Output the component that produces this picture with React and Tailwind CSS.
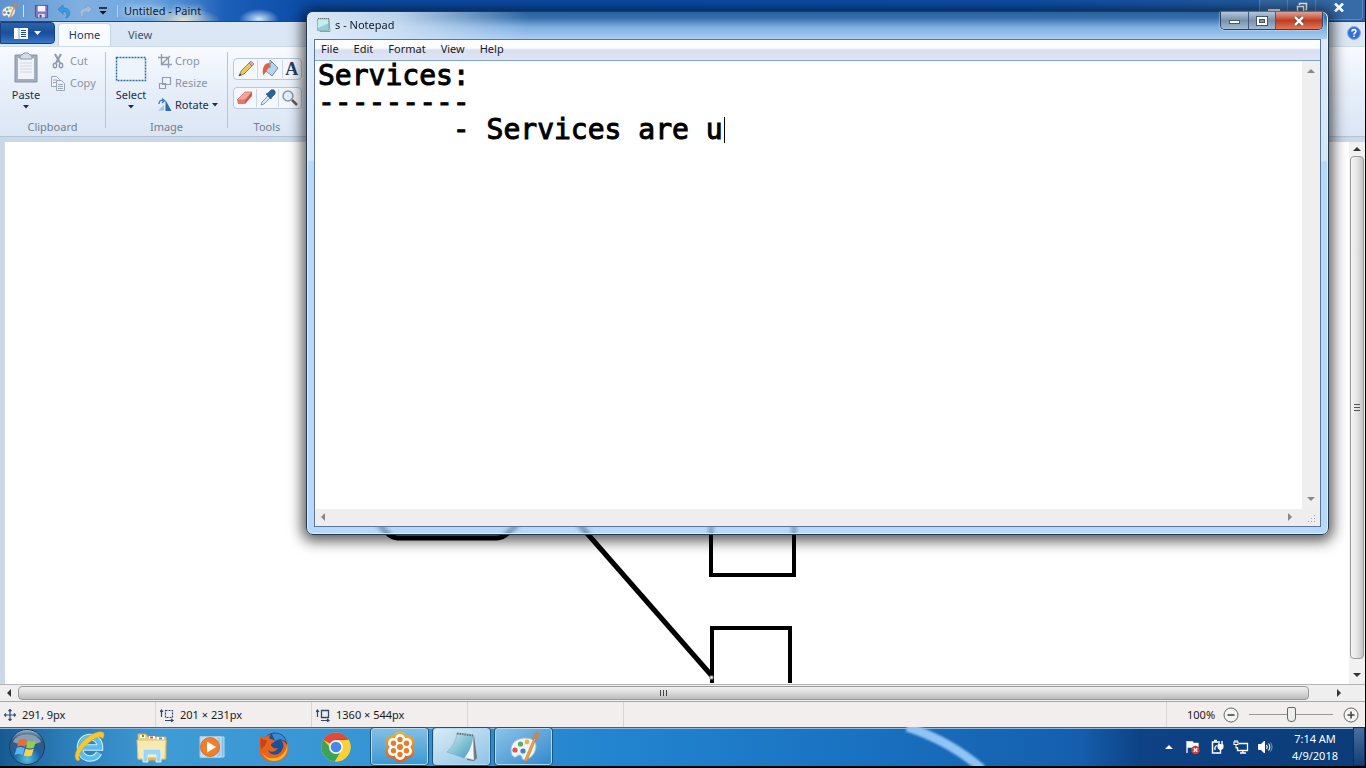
import React from "react";

const Caret = ({ className = "" }) => (
  <svg className={className} width="6" height="4" viewBox="0 0 6 4" fill="currentColor" aria-hidden="true">
    <path d="M0 0h6L3 3.5z" />
  </svg>
);

const Arrow = ({ dir, className = "" }) => {
  const d = {
    up: "M0 6h8L4 2z",
    down: "M0 2h8L4 6z",
    left: "M6 0v8L2 4z",
    right: "M2 0v8L6 4z",
  }[dir];
  return (
    <svg className={className} width="8" height="8" viewBox="0 0 8 8" fill="currentColor" aria-hidden="true">
      <path d={d} />
    </svg>
  );
};

const PaletteIcon = ({ size }) => (
  <svg width={size} height={size} viewBox="0 0 32 32" aria-hidden="true">
    <path d="M3 20C2 12 9 7 17 7c7 0 11 3 11 8 0 7-5 13-12 14-3 0-1-4-4-5-3 0-3 3-6 2-2-1-3-3-3-6z" fill="#eef6fc" stroke="#9db9cf" strokeWidth="1" />
    <circle cx="7" cy="19" r="2.6" fill="#e0564b" />
    <circle cx="12.500" cy="13" r="2.600" fill="#5cae5e" />
    <circle cx="19" cy="11" r="2.400" fill="#f2b33c" />
    <circle cx="15" cy="20" r="2.600" fill="#3f86ba" />
    <path d="M28 8 19 30l-2 .5L17 28 26 7z" fill="#eda044" stroke="#c07b2c" strokeWidth=".6" />
    <path d="M25 7c-1-3 1-5 4-7 1 2 4 2 3 5-1 2-2 4-4 4z" fill="#b98b60" />
  </svg>
);

const NotepadSmall = () => (
  <svg width="16" height="16" viewBox="0 0 16 16" aria-hidden="true">
    <path d="M2 2h11l1 12.500H4z" fill="#e9f2ee" stroke="#8c8c6c" strokeWidth=".8" />
    <path d="M1.500 2h11v11.500h-11z" fill="#8fd0d8" stroke="#78a5ac" strokeWidth=".7" />
    <path d="M2 2.500h10v4L2 11z" fill="#c5ecee" />
    <path d="M2 1.500h11" stroke="#64757c" strokeDasharray="1 1" />
  </svg>
);

const Flag = () => (
  <svg width="16" height="16" viewBox="0 0 16 16" aria-hidden="true">
    <path d="M2 2v12M2.500 3h5l1 1.500H13v5H8L7 8H2.500z" stroke="#fff" strokeWidth="1.300" fill="#fff" />
    <circle cx="10.500" cy="11" r="4.300" fill="#d33a35" />
    <path d="m8.700 9.200 3.600 3.600m0-3.600-3.600 3.600" stroke="#fff" strokeWidth="1.400" />
  </svg>
);

const Power = () => (
  <svg width="16" height="16" viewBox="0 0 16 16" fill="none" stroke="#fff" aria-hidden="true">
    <path d="M9 3H3.500v11H9M5 1.500h3" strokeWidth="1.500" />
    <path d="M6 11c-.5-3 .5-4 2-4.500" strokeWidth="1.300" />
    <path d="M9 5.500h5v2.500c0 2-1 2.500-2.500 2.500S9 10 9 8z" fill="#fff" />
    <path d="M10 2v3m3-3v3M11.500 10v4H8" strokeWidth="1.400" />
  </svg>
);

const Network = () => (
  <svg width="16" height="16" viewBox="0 0 16 16" fill="none" stroke="#fff" aria-hidden="true">
    <path d="M6 4.500h8.500v7H4.500V8M7 14h6M9.800 11.500V14" strokeWidth="1.300" />
    <path d="M1 3h4v2.500H1zM3 5.500V9h1.500M2 1v2M4 1v2" strokeWidth="1.100" />
  </svg>
);

const Volume = () => (
  <svg width="16" height="16" viewBox="0 0 16 16" fill="none" stroke="#fff" aria-hidden="true">
    <path d="M1.500 5.500H4l3.500-3.500v12L4 10.500H1.500z" fill="#fff" />
    <path d="M9.500 6c1 1.300 1 2.700 0 4" strokeWidth="1.200" />
    <path d="M11.500 4.500c1.800 2.300 1.800 4.700 0 7" strokeWidth="1.100" />
    <path d="M13.500 3.500c2 3 2 6 0 9" strokeWidth=".8" opacity=".6" />
  </svg>
);

const Start = () => (
  <svg width="38" height="38" viewBox="0 0 38 38" aria-hidden="true">
    <defs>
      <radialGradient id="orb" cx=".5" cy=".85" r=".85">
        <stop offset="0" stopColor="#4fc1e8" />
        <stop offset=".45" stopColor="#1d639e" />
        <stop offset=".8" stopColor="#38597b" />
        <stop offset="1" stopColor="#a9c2d6" />
      </radialGradient>
    </defs>
    <circle cx="19" cy="19" r="17.500" fill="url(#orb)" stroke="#133f6a" />
    <path d="M5 14a15 12 0 0 1 28 0c-9 4-19 4-28 0z" fill="#c9d8e4" opacity=".55" />
    <path d="M11 12c3-2 5-1.500 8 0l-2 7c-3-1.500-5-1.500-8-.2z" fill="#ef6b32" />
    <path d="M20 12.500c3 1.500 5 1.500 8 0l-2 7c-3 1.300-5 1.300-8 0z" fill="#9bcb47" />
    <path d="M8.600 20c3-1.500 5-1 8 .3l-2 6.800c-3-1.500-5-1.500-8 0z" fill="#5cb4ea" />
    <path d="M17.700 20.800c3 1.300 5 1.300 8 0l-2 6.700c-3 1.500-5 1.200-8 0z" fill="#fdd14a" />
  </svg>
);

const Explorer = () => (
  <svg width="32" height="32" viewBox="0 0 32 32" aria-hidden="true">
    <path d="M25 22c-2 4-5 5.500-9 5.500-6 0-10-4.500-10-11S10.500 6 16 6s10 4 10 10.500H8" fill="none" stroke="#d2f1fc" strokeWidth="6.500" />
    <path d="M25 22c-2 4-5 5.500-9 5.500-6 0-10-4.500-10-11S10.500 6 16 6s10 4 10 10.500H8" fill="none" stroke="#5cbdec" strokeWidth="4.500" />
    <path d="M4 30C-3 27 4 13 14 6 22 0 31-1 30 4c0 2-1 3-2 4 0-3-4-3-11 2C9 16 2 25 6 28.500z" fill="#f6c832" stroke="#d69d1c" strokeWidth=".5" />
  </svg>
);

const Folder = () => (
  <svg width="34" height="32" viewBox="0 0 34 32" aria-hidden="true">
    <path d="M3 3h8l2 3h18v22H3z" fill="#e9d588" stroke="#c9ac55" />
    <path d="M5 4h5v3H5zM14 5h6v3h-6zM22 6h7v3h-7z" fill="#fff" />
    <path d="M7 5h2" stroke="#3ba84d" strokeWidth="2" />
    <path d="M15 6.500h3" stroke="#d55147" strokeWidth="2" />
    <path d="M24 7.500h3" stroke="#4c8bc4" strokeWidth="2" />
    <path d="M2 9h29l-1 19H3z" fill="#f8eaae" stroke="#d9c277" />
    <path d="M8 31V20q0-2 2-2h14q2 0 2 2v11h-5v-7h-8v7z" fill="#9ed3f2" stroke="#e2f4fd" />
    <path d="M13 28h8" stroke="#e9b64a" strokeWidth="3" />
  </svg>
);

const Media = () => (
  <svg width="28" height="28" viewBox="0 0 28 28" aria-hidden="true">
    <path d="M8 4h18v20H8z" fill="#86bce4" stroke="#b9dcf5" />
    <path d="M5 4h18v20H5z" fill="#9ccbed" stroke="#c9e4f7" />
    <path d="M2 3.500h18v21H2z" fill="#c4ddf0" stroke="#a6c8e3" />
    <circle cx="12" cy="14" r="9.500" fill="#ef7f2c" stroke="#c95f17" strokeWidth=".7" />
    <path d="M9 8.500v11l9-5.500z" fill="#fff" />
  </svg>
);

const Firefox = () => (
  <svg width="32" height="32" viewBox="0 0 32 32" aria-hidden="true">
    <circle cx="17" cy="14" r="12.500" fill="#1f4f96" />
    <path d="M14 3c6-2 12 1 14 7l-6-2-5 2z" fill="#3a8bce" />
    <path d="M2 5c1 1 2 2 4 2 2-2 5-3 7-4-2 2-2 4-1 5 2 0 4 1 5 2-1 2-4 2-4 4 1 3 4 4 7 3-2 4-7 5-10 2 2 6 12 7 15-2 1-3 0-6-2-8 3 1 5 3 6 5 0-3-1-5-2-7 3 4 4 8 3 13-2 7-8 11-15 11C5 31-1 22 1.500 12 1 10 1 7 2 5z" fill="#e8631c" />
    <path d="M4 21c4 7 14 9 21 2 3-3 4-7 4-10 2 8-3 17-13 17-6 0-10-4-12-9z" fill="#f8b62d" />
    <path d="M3 7c2 2 4 2 6 2l-2 6c-2 0-3 2-3 4-2-4-2-8-1-12z" fill="#c6401b" />
  </svg>
);

const Chrome = () => (
  <svg width="32" height="32" viewBox="0 0 32 32" aria-hidden="true">
    <circle cx="16" cy="16" r="14.500" fill="#fcd037" />
    <path d="M16 16 3.400 8.700A14.500 14.500 0 0 1 28.600 8.800z" fill="#de4b3e" />
    <path d="M3.400 8.700A14.500 14.500 0 0 0 15 30.500l6-11-9-1z" fill="#3da354" />
    <path d="M16 9h12.700a14.500 14.500 0 0 1-13.700 21.500l7-11z" fill="#fcd037" />
    <path d="M16 9H28.700L16 8z" fill="#c83c34" />
    <circle cx="16" cy="16" r="7" fill="#f3f6f9" />
    <circle cx="16" cy="16" r="5.300" fill="#4587ea" />
  </svg>
);

const Flower = () => (
  <svg width="32" height="32" viewBox="0 0 32 32" aria-hidden="true">
    <defs>
      <linearGradient id="petal" x2="0" y1="0" y2="32" gradientUnits="userSpaceOnUse">
        <stop offset="0" stopColor="#f0b52c" />
        <stop offset="1" stopColor="#db5b26" />
      </linearGradient>
    </defs>
    <g fill="url(#petal)">
      <circle cx="16" cy="16" r="12" />
      <circle cx="16" cy="7.500" r="7" /><circle cx="23.500" cy="11.500" r="7" /><circle cx="23.500" cy="20.500" r="7" />
      <circle cx="16" cy="24.500" r="7" /><circle cx="8.500" cy="20.500" r="7" /><circle cx="8.500" cy="11.500" r="7" />
    </g>
    <g fill="#fff">
      <circle cx="16" cy="16" r="8" />
      <circle cx="16" cy="8" r="5" /><circle cx="23" cy="12" r="5" /><circle cx="23" cy="20" r="5" />
      <circle cx="16" cy="24" r="5" /><circle cx="9" cy="20" r="5" /><circle cx="9" cy="12" r="5" />
    </g>
    <g fill="#e57c29">
      <circle cx="16" cy="8.500" r="2.700" /><circle cx="22.500" cy="12.200" r="2.700" /><circle cx="22.500" cy="19.800" r="2.700" />
      <circle cx="16" cy="23.500" r="2.700" /><circle cx="9.500" cy="19.800" r="2.700" /><circle cx="9.500" cy="12.200" r="2.700" />
      <circle cx="16" cy="16" r="3" />
    </g>
  </svg>
);

const NotepadBig = () => (
  <svg width="34" height="32" viewBox="0 0 34 32" aria-hidden="true">
    <defs>
      <linearGradient id="pad" x2="1" y2="1">
        <stop offset="0" stopColor="#d2edf4" />
        <stop offset="1" stopColor="#3c9cba" />
      </linearGradient>
    </defs>
    <path d="M29 4l3 23-3 3-7-1z" fill="#6a7480" />
    <path d="M28 4l1 25-12-3z" fill="#f4f8f9" stroke="#aebcc4" strokeWidth=".6" />
    <path d="M12 2 28 4c-1 10-4 17-9 23L2 21C8 15 11 10 12 2z" fill="url(#pad)" stroke="#7ca9b8" strokeWidth=".6" />
    <path d="M12 2.500 28 4.500" stroke="#65727b" strokeWidth="2" strokeDasharray="1.500 1" />
  </svg>
);

function PaintTitleBar() {
  return (
    <header className="flex h-[22px] shrink-0 items-center justify-between bg-[radial-gradient(ellipse_36px_12px_at_184px_20px,#dfe3cf,transparent),radial-gradient(ellipse_20px_10px_at_259px_19px,#cfe6fb,transparent),linear-gradient(90deg,#5f93cf_0px,#80b0e1_80px,#6ba5e0_150px,#1c5fb8_225px,#0b4da8_300px,#0c50ac_75%,#2c63a3_100%)] pl-px shadow-[inset_0_-1px_0_#1b4a85]">
      <div className="flex items-center">
        <PaletteIcon size={16} />
        <span className="mx-1.5 h-3 w-px bg-[#d3e4f5]" />
        <button aria-label="Save" className="ml-1">
          <svg width="15" height="15" viewBox="0 0 16 16" aria-hidden="true">
            <path d="M1.500 1.500h13v13H3l-1.500-1z" fill="#8374bc" stroke="#574a93" />
            <path d="M4 2h8v6H4z" fill="#f3f4fb" />
            <path d="M4.500 10.500h7v4h-7z" fill="#d8d9e8" />
            <path d="M6 11.500h2v3H6z" fill="#4b4378" />
          </svg>
        </button>
        <button aria-label="Undo" className="ml-2">
          <svg width="15" height="15" viewBox="0 0 16 16" aria-hidden="true">
            <path d="M1 5.500 6.500 1v3c5 0 8 3 7 7-.5 2-2 3.500-4 4 2-3 1.500-7-3-7v3z" fill="#3f96e2" stroke="#2878c4" strokeWidth=".6" />
          </svg>
        </button>
        <button aria-label="Redo" className="ml-1.5">
          <svg width="15" height="15" viewBox="0 0 16 16" aria-hidden="true">
            <path d="M15 5.500 9.500 1v3c-5 0-8 3-7 7 .5 2 2 3.500 4 4-2-3-1.500-7 3-7v3z" fill="#a3bedb" stroke="#7f9dbe" strokeWidth=".6" />
          </svg>
        </button>
        <button aria-label="Customize toolbar" className="ml-1.5">
          <svg width="8" height="8" viewBox="0 0 8 8" aria-hidden="true"><path d="M0 1h8" stroke="#111" strokeWidth="1.500" /><path d="M.5 4h7L4 7.500z" fill="#111" /></svg>
        </button>
        <span className="ml-2.5 h-3 w-px bg-[#b9d3ee]" />
        <h1 className="ml-1.5 text-[#0b1a2c] [text-shadow:0_0_6px_#fff,0_0_8px_#dceaf8]">Untitled - Paint</h1>
      </div>
      <div className="flex h-full items-start text-white">
        <button aria-label="Minimize Paint" className="flex h-5 w-7 items-end justify-center border-l border-[#5988c0] bg-[#356ba9] pb-2"><span className="h-[3px] w-3 bg-white" /></button>
        <button aria-label="Restore Paint" className="flex h-5 w-7 items-center justify-center border-l border-[#5988c0] bg-[#356ba9] pb-1">
          <svg width="12" height="12" viewBox="0 0 12 12" fill="none" stroke="#fff" strokeWidth="1.500" aria-hidden="true"><path d="M3.500 3V1.500h7v6H9M1.500 4.500h6v6h-6z" /></svg>
        </button>
        <button aria-label="Close Paint" className="mr-0.5 flex h-5 w-12 items-center justify-center rounded-br border border-t-0 border-[#5988c0] bg-[#356ba9] pb-1">
          <svg width="10" height="9" viewBox="0 0 10 9" stroke="#fff" strokeWidth="2.600" aria-hidden="true"><path d="m1 .5 8 8m0-8-8 8" /></svg>
        </button>
      </div>
    </header>
  );
}

function Group({ label, className, children }) {
  return (
    <section className={"flex shrink-0 flex-col justify-between " + className} aria-label={label}>
      <div className="flex">{children}</div>
      <p className="text-center leading-[14px] text-[#737f8e]">{label}</p>
    </section>
  );
}

const Divider = () => <span className="h-[76px] w-px shrink-0 bg-[#b5c5d9]" />;

function Ribbon() {
  return (
    <>
      <nav className="flex h-6 shrink-0 items-end justify-between bg-[#dce7f5]">
        <div className="flex h-full items-end">
          <button aria-label="Paint menu" className="flex h-[22px] w-[55px] items-center justify-center gap-1.5 self-start rounded-r-sm border border-[#17427c] bg-linear-to-b from-[#2b62ae] via-[#1b4e9b] to-[#3679c8] text-white">
            <svg width="14" height="11" viewBox="0 0 14 11" aria-hidden="true"><path d="M0 0h14v11H0z" fill="#fff" /><path d="M7 2.500h5m-5 2h5m-5 2h5m-5 2h5" stroke="#1c4d93" /><path d="M5 0v11" stroke="#7ba0d0" /></svg>
            <svg width="7" height="4" viewBox="0 0 7 4" fill="#fff" aria-hidden="true"><path d="M0 0h7L3.500 4z" /></svg>
          </button>
          <button className="ml-[3px] h-[23px] w-[53px] rounded-t border border-b-0 border-[#c3d5ea] bg-[#f8fbff] text-[#1e395b]">Home</button>
          <button className="h-[23px] w-[58px] text-[#3d5370]">View</button>
        </div>
        <button aria-label="Help" className="mr-1 mb-1.5">
          <svg width="14" height="14" viewBox="0 0 14 14" aria-hidden="true">
            <circle cx="7" cy="7" r="6.400" fill="#2f6fe0" stroke="#8ba6cf" />
            <path d="M5 5.500C5 3 9.200 3 9 5.500 8.900 6.800 7 6.800 7 8.500M7 9.500v1.500" fill="none" stroke="#fff" strokeWidth="1.600" />
          </svg>
        </button>
      </nav>
      <div className="flex h-[91px] shrink-0 border-y border-t-[#cbd9ea] border-b-[#b3c3d6] bg-linear-to-b from-[#f8fbff] via-[#e6eef9] to-[#dbe6f5] pt-[5px] pb-0.5 text-[#1e2f48]">
        <Group label="Clipboard" className="w-[105px]">
          <button className="ml-2 flex w-9 flex-col items-center">
            <svg width="26" height="32" viewBox="0 0 26 32" aria-hidden="true">
              <path d="M2 3h22v27H2z" fill="#a3aebd" stroke="#8692a4" />
              <path d="M5 6h16v21H5z" fill="#f0f3f8" />
              <path d="M7 5c0-2 3-2 4-4h4c1 2 4 2 4 4v2H7z" fill="#d6dce5" stroke="#8b97a8" />
              <path d="M7 11h12M7 14h12M7 17h12M7 20h12" stroke="#d1d8e2" />
            </svg>
            <span className="mt-[3px] mb-0.5 leading-4">Paste</span>
            <Caret />
          </button>
          <div className="ml-1.5 flex flex-col gap-1.5 pt-px text-[#8a94a2]">
            <button className="flex h-4 items-center gap-1">
              <svg width="16" height="16" viewBox="0 0 16 16" fill="none" stroke="#8e99a9" strokeWidth="1.400" aria-hidden="true"><path d="m5 1 5 9M11 1 6 10" strokeWidth="2" /><ellipse cx="5" cy="12.500" rx="1.700" ry="2.200" /><ellipse cx="11" cy="12.500" rx="1.700" ry="2.200" /></svg>
              Cut
            </button>
            <button className="flex h-4 items-center gap-1">
              <svg width="16" height="16" viewBox="0 0 16 16" fill="#eef2f8" stroke="#9ba7b8" aria-hidden="true"><path d="M1.500 1.500h5l3 3v7h-8zM3 5h4M3 7.500h4" /><path d="M6.500 5.500h5l3 3v7h-8zM8 9.500h5m-5 2h5m-5 2h5" /></svg>
              Copy
            </button>
          </div>
        </Group>
        <Divider />
        <Group label="Image" className="w-[121px]">
          <button className="ml-1.5 flex w-[38px] flex-col items-center">
            <svg width="32" height="32" viewBox="0 0 32 32" aria-hidden="true"><path d="M1.500 5.500h29v23h-29z" fill="#eef4fc" stroke="#2e6da8" strokeWidth="1.500" strokeDasharray="2 1" /></svg>
            <span className="mt-[3px] mb-0.5 leading-4">Select</span>
            <Caret />
          </button>
          <div className="ml-2 flex flex-col gap-1.5 pt-px text-[#8a94a2]">
            <button className="flex h-4 items-center gap-[3px]">
              <svg width="14" height="14" viewBox="0 0 14 14" fill="none" stroke="#929dac" strokeWidth="1.400" aria-hidden="true"><path d="M3.500 0v10.500H14M0 3.500h10.500V14M4 10l8-8" /></svg>
              Crop
            </button>
            <button className="flex h-4 items-center gap-[3px]">
              <svg width="14" height="14" viewBox="0 0 14 14" fill="#edf2f9" stroke="#929dac" strokeWidth="1.200" aria-hidden="true"><path d="M4.500 1.500h8v7h-8zM1.500 7.500h6v5h-6z" /></svg>
              Resize
            </button>
            <button className="flex h-4 items-center gap-[3px] text-[#1e2f48]">
              <svg width="14" height="14" viewBox="0 0 14 14" aria-hidden="true"><path d="M0 12.500h6V7z" fill="#9ec3e4" /><path d="M7.500 13V2L13.500 13z" fill="#2b6db0" /><path d="M1 6C1 2.500 3 2 5 2.500M4 .5 6.500 2.700 4 5" fill="none" stroke="#3479bb" strokeWidth="1.300" /></svg>
              Rotate
              <Caret />
            </button>
          </div>
        </Group>
        <Divider />
        <Group label="Tools" className="w-[78px]">
          <div className="mt-1.5 ml-[5px] flex flex-col gap-[7px]">
            <div className="flex h-[22px] w-[69px] items-center justify-around divide-x divide-[#cbd7e5] rounded-sm border border-[#b9c8da] bg-[#f4f8fd]">
              <button aria-label="Pencil" className="flex grow justify-center">
                <svg width="18" height="18" viewBox="0 0 18 18" aria-hidden="true"><path d="m2 16 2-5 8-8 3 3-8 8z" fill="#efc456" stroke="#8d7437" strokeWidth=".8" /><path d="m12 3 2-2 3 3-2 2z" fill="#d9a5a0" stroke="#777" strokeWidth=".6" /><path d="m2 16 1-2.500L4.500 15z" fill="#333" /></svg>
              </button>
              <button aria-label="Fill with color" className="flex grow justify-center">
                <svg width="18" height="18" viewBox="0 0 18 18" aria-hidden="true"><path d="m5 7 6-5 6 6-6 8-6-5z" fill="#b7d3ec" stroke="#6a8db3" /><path d="M11 2 9 0v8" fill="none" stroke="#7389a2" /><path d="M8 3C3 3 1 8 2 15c2 0 3-5 7-8z" fill="#e26042" /></svg>
              </button>
              <button aria-label="Text" className="flex grow justify-center font-['Liberation_Serif',serif] text-[18px] leading-5 font-bold text-[#23405f]">A</button>
            </div>
            <div className="flex h-[22px] w-[69px] items-center justify-around divide-x divide-[#cbd7e5] rounded-sm border border-[#b9c8da] bg-[#f4f8fd]">
              <button aria-label="Eraser" className="flex grow justify-center">
                <svg width="18" height="18" viewBox="0 0 18 18" aria-hidden="true"><path d="m1 11 8-8h7l-7 8z" fill="#f3a598" stroke="#c05c52" strokeWidth=".6" /><path d="M1 11h8v4H2z" fill="#e7766b" /><path d="m9 11 7-8v4l-7 8z" fill="#d1564f" /></svg>
              </button>
              <button aria-label="Color picker" className="flex grow justify-center">
                <svg width="18" height="18" viewBox="0 0 18 18" aria-hidden="true"><path d="m2 16 1-3 6-6 2 2-6 6z" fill="#d4e8f7" stroke="#6387aa" strokeWidth=".8" /><path d="m7 5 2-1 3-3c3-1 5 1 4 4l-3 3-1 2z" fill="#2b6398" stroke="#1d4a78" strokeWidth=".6" /></svg>
              </button>
              <button aria-label="Magnifier" className="flex grow justify-center">
                <svg width="18" height="18" viewBox="0 0 18 18" aria-hidden="true"><circle cx="7" cy="7" r="5" fill="#e2effa" stroke="#8a97a6" strokeWidth="1.500" /><path d="m11 11 5 5" stroke="#6d5a4c" strokeWidth="2.500" /></svg>
              </button>
            </div>
          </div>
        </Group>
      </div>
    </>
  );
}

function PaintCanvas() {
  return (
    <main className="flex min-h-0 flex-1 flex-col bg-[#ccd8e8] pt-[5px]">
      <div className="flex min-h-0 flex-1">
        <div className="ml-[5px] min-w-0 flex-1 overflow-hidden bg-white">
          <svg width="1344" height="541" viewBox="5 142 1344 541" fill="none" stroke="#000" role="img" aria-label="Drawing">
            <path d="M378 524 386 532Q392 538 398 538H497Q503 538 509 532L518 524" strokeWidth="5" />
            <path d="M578 523 712 676" strokeWidth="5" />
            <path d="M711 480H794V575H711z" strokeWidth="4" />
            <path d="M712 700V628H790V700" strokeWidth="4" />
            <path d="M710 676h3v3h-3z" fill="#fff" stroke="#888" strokeWidth="1" />
          </svg>
        </div>
        <div className="flex w-4 flex-col items-center bg-[#f1f1f1] text-[#333]">
          <button aria-label="Scroll up" className="flex h-3.5 items-center"><Arrow dir="up" /></button>
          <div className="flex w-3.5 flex-1 items-center justify-center rounded-sm border border-[#9a9a9a] bg-linear-to-r from-[#f6f6f6] via-[#e3e3e3] to-[#c4c4c4]">
            <svg width="6" height="8" viewBox="0 0 6 8" stroke="#555" aria-hidden="true"><path d="M0 .5h6M0 3.500h6M0 6.500h6" /></svg>
          </div>
          <button aria-label="Scroll down" className="flex h-[25px] items-center pt-1.5"><Arrow dir="down" /></button>
        </div>
      </div>
      <div className="flex h-[17px] shrink-0 items-center border-t border-[#b5b5b5] bg-[#efefef] text-[#333]">
        <button aria-label="Scroll left" className="flex w-[18px] justify-center"><Arrow dir="left" /></button>
        <div className="flex h-3.5 flex-1 items-center justify-center rounded-sm border border-[#9a9a9a] bg-linear-to-b from-[#f0f0f0] via-[#d9d9d9] to-[#bdbdbd]">
          <svg width="8" height="6" viewBox="0 0 8 6" stroke="#444" aria-hidden="true"><path d="M.5 0v6M3.500 0v6M6.500 0v6" /></svg>
        </div>
        <button aria-label="Scroll right" className="flex w-14 justify-center pl-1"><Arrow dir="right" /></button>
      </div>
    </main>
  );
}

function StatusBar() {
  return (
    <footer className="flex h-[26px] shrink-0 items-center border-t border-[#a8a8a8] bg-[#f1eeed] text-[#1a1a1a]">
      <div className="flex h-full w-[156px] items-center gap-1.5 border-r border-[#d8d5d3] pl-1">
        <svg width="12" height="12" viewBox="0 0 12 12" fill="none" stroke="#2d4a70" strokeWidth="1.200" aria-hidden="true"><path d="M6 .5v11M.5 6h11M4.500 2 6 .5 7.500 2M4.500 10 6 11.500 7.500 10M2 4.500.5 6 2 7.500M10 4.500 11.500 6 10 7.500" /></svg>
        291, 9px
      </div>
      <div className="flex h-full w-[156px] items-center gap-1.5 border-r border-[#d8d5d3] pl-1">
        <svg width="14" height="14" viewBox="0 0 14 14" fill="none" stroke="#2d4a70" aria-hidden="true"><path d="M1.500 2v7M0 4l1.500-2L3 4M5 12.500h8M11 11l2 1.500-2 1.500" strokeWidth="1.200" /><path d="M5.500 2.500h7v7h-7z" strokeDasharray="2 1" strokeWidth="1.200" /></svg>
        201 × 231px
      </div>
      <div className="flex h-full w-[156px] items-center gap-1.5 border-r border-[#d8d5d3] pl-1">
        <svg width="14" height="14" viewBox="0 0 14 14" fill="none" stroke="#2d4a70" aria-hidden="true"><path d="M1.500 2v7M0 4l1.500-2L3 4M5 12.500h8M11 11l2 1.500-2 1.500" strokeWidth="1.200" /><path d="M5.500 2.500h7v7h-7z" strokeWidth="1.300" /></svg>
        1360 × 544px
      </div>
      <div className="h-full w-[156px] border-r border-[#d8d5d3]" />
      <div className="h-full flex-1 border-r border-[#d8d5d3]" />
      <div className="flex items-center pr-1.5 pl-5">
        <label htmlFor="zoom" className="w-9">100%</label>
        <button aria-label="Zoom out" className="flex">
          <svg width="16" height="16" viewBox="0 0 16 16" aria-hidden="true"><circle cx="8" cy="8" r="7" fill="#f5f5f5" stroke="#666" /><path d="M4.500 8h7" stroke="#444" strokeWidth="1.600" /></svg>
        </button>
        <input
          id="zoom"
          type="range"
          defaultValue="50"
          className="mx-2.5 h-4 w-[84px] appearance-none bg-[linear-gradient(#999,#999)] bg-[length:100%_1px] bg-center bg-no-repeat [&::-webkit-slider-thumb]:h-[15px] [&::-webkit-slider-thumb]:w-[9px] [&::-webkit-slider-thumb]:appearance-none [&::-webkit-slider-thumb]:rounded-t-[2px] [&::-webkit-slider-thumb]:rounded-b-[4px] [&::-webkit-slider-thumb]:border [&::-webkit-slider-thumb]:border-[#666] [&::-webkit-slider-thumb]:bg-[#eeeeee]"
        />
        <button aria-label="Zoom in" className="flex">
          <svg width="16" height="16" viewBox="0 0 16 16" aria-hidden="true"><circle cx="8" cy="8" r="7" fill="#f5f5f5" stroke="#666" /><path d="M4.500 8h7M8 4.500v7" stroke="#444" strokeWidth="1.600" /></svg>
        </button>
      </div>
    </footer>
  );
}

function Taskbar() {
  const task = "flex h-full w-[59px] items-center justify-center rounded-sm border border-[#1c5480] shadow-[inset_0_0_0_1px_#b4dbf3]";
  return (
    <nav aria-label="Taskbar" className="relative flex h-[39px] shrink-0 items-center justify-between bg-[linear-gradient(90deg,#175a92_0px,#2c7db8_65px,#3f9bd5_160px,#3795d6_370px,#2284cf_620px,#1a71c1_860px,#155eae_1080px,#0d4285_1140px,#0c3c78_100%)] shadow-[inset_0_1px_0_#3c6288,inset_0_2px_0_#8db9de]">
      <svg className="absolute top-0 left-[880px]" width="120" height="39" viewBox="0 0 120 39" fill="none" aria-hidden="true">
        <defs><filter id="soft"><feGaussianBlur stdDeviation="1.2" /></filter></defs>
        <path d="M27 0Q70 14 102 42" stroke="#8fc4f4" strokeWidth="9" filter="url(#soft)" />
      </svg>
      <div className="relative flex h-full items-center">
        <button aria-label="Start" className="flex w-[54px] justify-center"><Start /></button>
        <button aria-label="Internet Explorer" className="flex w-[72px] justify-center"><Explorer /></button>
        <button aria-label="Windows Explorer" className="flex w-[52px] justify-center"><Folder /></button>
        <button aria-label="Media Player" className="flex w-16 justify-center pl-1"><Media /></button>
        <button aria-label="Firefox" className="flex w-16 justify-center"><Firefox /></button>
        <button aria-label="Chrome" className="flex w-16 justify-center pr-1"><Chrome /></button>
        <div className="flex h-full gap-[3px]">
          <button aria-label="GoToMeeting" className={task + " bg-linear-to-b from-[#83bfe4] to-[#3798d3]"}><Flower /></button>
          <button aria-label="Notepad" className={task + " bg-linear-to-br from-[#d9edf7] to-[#8dc2e4]"}><NotepadBig /></button>
          <button aria-label="Paint" className={task + " bg-linear-to-br from-[#8bc3e9] to-[#2d8ace]"}><PaletteIcon size={32} /></button>
        </div>
      </div>
      <div className="flex h-full items-center text-white">
        <button aria-label="Show hidden icons" className="mr-3"><Arrow dir="up" /></button>
        <div className="flex gap-2"><Flag /><Power /><Network /><Volume /></div>
        <time className="mr-2.5 ml-3.5 w-14 text-center leading-[17px]">7:14 AM<br />4/9/2018</time>
        <button aria-label="Show desktop" className="h-full w-3 border border-[#09305f] bg-linear-to-b from-[#46709f] to-[#123f75]" />
      </div>
    </nav>
  );
}

function Notepad() {
  return (
    <section
      aria-label="Notepad"
      className="absolute top-[11px] right-9 left-[306px] flex h-[524px] flex-col rounded-[7px] border border-[#27394c] bg-[linear-gradient(180deg,#dfeafa_0px,#d3e6fa_148px,rgba(154,201,248,0.72)_150px)] px-[7px] pb-[7px] shadow-[inset_0_0_0_1px_rgba(235,246,255,0.75),0_2px_14px_4px_rgba(0,0,0,0.65)] backdrop-blur-[2px]"
    >
      <div className="-mx-[6px] flex h-[27px] shrink-0 items-start justify-between rounded-t-md bg-[linear-gradient(90deg,rgba(228,239,251,0.95)_0px,rgba(211,228,246,0.85)_90px,rgba(190,217,245,0)_220px),linear-gradient(180deg,#28609f_0px,#366fab_6px,#7eaedf_15px,#a9cdf2_27px)]">
        <div className="flex h-[25px] items-center gap-[3px] pl-2">
          <NotepadSmall />
          <h2 className="text-[#101c2a]">s - Notepad</h2>
        </div>
        <div className="mr-1 flex h-[18px] overflow-hidden rounded-b-[5px] border border-t-0 border-[#2c4564] shadow-[0_0_2px_#fff]">
          <button aria-label="Minimize" className="flex w-7 items-end justify-center border-r border-[#415d7e] bg-linear-to-b from-[#b5c7d9] via-[#7890ab] to-[#a4bdd6] pb-[5px]"><span className="h-1 w-[11px] border border-[#4a5a6b] bg-white" /></button>
          <button aria-label="Maximize" className="flex w-[27px] items-center justify-center border-r border-[#415d7e] bg-linear-to-b from-[#b5c7d9] via-[#7890ab] to-[#a4bdd6]">
            <svg width="12" height="10" viewBox="0 0 12 10" fill="none" aria-hidden="true"><path d="M2 2h8v6H2z" stroke="#46566a" strokeWidth="4" /><path d="M2 2h8v6H2z" stroke="#fff" strokeWidth="2" /></svg>
          </button>
          <button aria-label="Close" className="flex w-[46px] items-center justify-center bg-linear-to-b from-[#dfa294] via-[#bf3b22] to-[#df7953]">
            <svg width="12" height="10" viewBox="0 0 12 10" aria-hidden="true"><path d="m2 1 8 8m0-8-8 8" stroke="#66322a" strokeWidth="4" /><path d="m2 1 8 8m0-8-8 8" stroke="#fff" strokeWidth="2.500" /></svg>
          </button>
        </div>
      </div>
      <div className="flex min-h-0 flex-1 flex-col border border-[#5c7796] bg-white">
        <div className="flex h-[21px] shrink-0 items-center gap-[15px] border-b border-[#7fa6cd] bg-linear-to-b from-[#fcfdff] from-40% via-[#d8dff0] via-50% to-[#dfe5f5] pb-0.5 pl-1.5 text-[#17202d]">
          <button>File</button><button>Edit</button><button>Format</button><button>View</button><button>Help</button>
        </div>
        <div className="flex min-h-0 flex-1">
          <div className="relative min-w-0 flex-1">
            <textarea
              aria-label="Document text"
              spellCheck="false"
              wrap="off"
              defaultValue={"Services:\n---------\n\t- Services are u"}
              className="block h-full w-full resize-none overflow-hidden bg-white pt-px pl-[3px] font-['DejaVu_Sans_Mono',monospace] text-[28px] leading-[27px] text-black outline-none [-webkit-text-stroke:1px_black] [tab-size:8]"
            />
            <span className="absolute top-14 left-[409px] h-[26px] w-px bg-black" />
          </div>
          <div className="flex w-[18px] flex-col items-center justify-between bg-[#efefef] py-1.5 text-[#888]">
            <button aria-label="Scroll text up"><Arrow dir="up" className="block" /></button>
            <button aria-label="Scroll text down"><Arrow dir="down" className="block" /></button>
          </div>
        </div>
        <div className="flex h-[17px] shrink-0 items-center bg-[#eeeeee] px-1 pb-px text-[#888]">
          <button aria-label="Scroll text left"><Arrow dir="left" className="block" /></button>
          <span className="flex-1" />
          <button aria-label="Scroll text right"><Arrow dir="right" className="block" /></button>
          <svg className="ml-3 self-end" width="10" height="10" viewBox="0 0 10 10" fill="#aaa" aria-hidden="true"><path d="M8 0h1v1H8zM5 3h1v1H5zM8 3h1v1H8zM2 6h1v1H2zM5 6h1v1H5zM8 6h1v1H8z" /></svg>
        </div>
      </div>
    </section>
  );
}

export default function App() {
  return (
    <div className="relative flex h-screen flex-col overflow-hidden border-r border-b-2 border-black bg-white font-['Noto_Sans','Open_Sans',sans-serif] text-[11px] leading-4">
      <PaintTitleBar />
      <Ribbon />
      <PaintCanvas />
      <StatusBar />
      <Taskbar />
      <Notepad />
    </div>
  );
}
